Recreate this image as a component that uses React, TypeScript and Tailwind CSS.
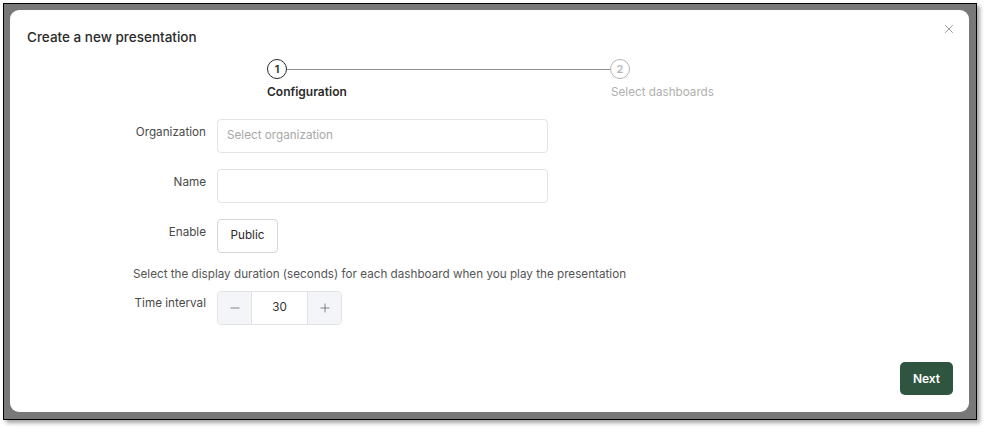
import { X, Minus, Plus } from "lucide-react";

const FormRow = ({ label, children }: { label: string; children: React.ReactNode }) => (
  <div className="flex items-start gap-[11px]">
    <div className="w-[73px] shrink-0 whitespace-nowrap pt-[5px] text-right text-[11.7px] leading-4 text-[#4a4a4a]">{label}</div>
    {children}
  </div>
);

export default function App() {
  return (
    <div
      className="h-[428px] w-[985px] bg-white pl-[3px] pt-[3px]"
      style={{ fontFamily: "Inter, 'Noto Sans', sans-serif" }}
    >
      <div className="h-[417px] w-[974px] border border-black bg-[#787878] p-[6px] shadow-[3px_3px_4px_rgba(0,0,0,0.35)]">
        <div className="relative flex h-[402px] w-[959px] flex-col rounded-[9px] bg-white p-[17px]">
          {/* Header */}
          <h2 className="text-[13.5px] font-medium leading-5 text-[#2b2b2b]">Create a new presentation</h2>
          <button className="absolute right-[13px] top-[12px] text-[#8a8a8a]" aria-label="Close">
            <X size={14} strokeWidth={1.5} />
          </button>

          {/* Steps */}
          <div className="ml-[240px] mt-[12px] flex">
            <div className="flex w-[343px] flex-col">
              <div className="flex items-center">
                <div className="flex h-5 w-5 shrink-0 items-center justify-center rounded-full border border-[#2b2b2b] text-[11px] font-semibold text-[#2b2b2b]">
                  1
                </div>
                <div className="h-px flex-1 bg-[#8f8f8f]" />
              </div>
              <div className="mt-[5px] text-[12px] font-semibold leading-4 text-[#2b2b2b]">Configuration</div>
            </div>
            <div className="flex flex-col">
              <div className="flex h-5 w-5 items-center justify-center rounded-full border border-[#b5b5b5] text-[11px] font-semibold text-[#b5b5b5]">
                2
              </div>
              <div className="mt-[5px] pl-px text-[11.7px] leading-4 text-[#b0b0b0]">Select dashboards</div>
            </div>
          </div>

          {/* Form */}
          <div className="ml-[106px] mt-[19px] flex flex-col">
            <FormRow label="Organization">
              <div className="flex h-[34px] w-[331px] items-center rounded border border-[#e3e3e3] px-[9px] text-[11.7px] text-[#a8a8a8]">
                Select organization
              </div>
            </FormRow>
            <div className="mt-4">
              <FormRow label="Name">
                <div className="h-[34px] w-[331px] rounded border border-[#e3e3e3]" />
              </FormRow>
            </div>
            <div className="mt-4">
              <FormRow label="Enable">
                <button className="h-[34px] w-[61px] rounded border border-[#d6d6d6] text-[11.7px] text-[#2b2b2b]">Public</button>
              </FormRow>
            </div>
            <p className="mt-[13px] text-[11.7px] leading-4 text-[#555]">
              Select the display duration (seconds) for each dashboard when you play the presentation
            </p>
            <div className="mt-[9px]">
              <div className="flex items-start gap-[11px]">
                <div className="w-[73px] shrink-0 whitespace-nowrap pt-[4px] text-right text-[11.7px] leading-4 text-[#4a4a4a]">Time interval</div>
                <div className="flex h-[34px] w-[125px] overflow-hidden rounded border border-[#e3e3e3]">
                  <div className="flex w-[33px] items-center justify-center bg-[#f4f5f8] text-[#555]">
                    <Minus size={14} strokeWidth={1.2} />
                  </div>
                  <div className="flex flex-1 items-center justify-center border-x border-[#e3e3e3] text-[11.7px] text-[#333]">30</div>
                  <div className="flex w-[33px] items-center justify-center bg-[#f4f5f8] text-[#555]">
                    <Plus size={14} strokeWidth={1.2} />
                  </div>
                </div>
              </div>
            </div>
          </div>

          {/* Footer */}
          <div className="mt-auto flex justify-end">
            <button className="-mr-px h-[33px] w-[53px] rounded-[5px] bg-[#2f5540] text-[12px] font-semibold text-white">Next</button>
          </div>
        </div>
      </div>
    </div>
  );
}
